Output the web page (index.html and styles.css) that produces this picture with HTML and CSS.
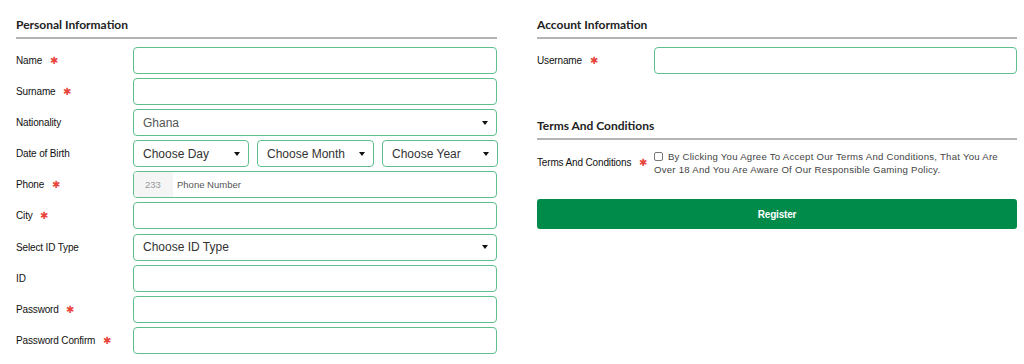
FILE: index.html
```html
<!DOCTYPE html>
<html lang="en">
<head>
    <meta charset="UTF-8">
    <meta name="viewport" content="width=device-width, initial-scale=1.0">
    <title>Register</title>
    <link rel="stylesheet" href="styles.css">
</head>
<body>
    <div class="register">
        <div class="column">
            <h3 class="section-title">Personal Information</h3>

            <div class="row">
                <label class="label">Name <span class="req">&#10033;</span></label>
                <input class="field" type="text">
            </div>
            <div class="row">
                <label class="label">Surname <span class="req">&#10033;</span></label>
                <input class="field" type="text">
            </div>
            <div class="row">
                <label class="label">Nationality</label>
                <div class="field select muted">Ghana <span class="caret"></span></div>
            </div>
            <div class="row">
                <label class="label">Date of Birth</label>
                <div class="dob">
                    <div class="field select">Choose Day <span class="caret"></span></div>
                    <div class="field select">Choose Month <span class="caret"></span></div>
                    <div class="field select">Choose Year <span class="caret"></span></div>
                </div>
            </div>
            <div class="row">
                <label class="label">Phone <span class="req">&#10033;</span></label>
                <div class="field phone">
                    <span class="prefix">233</span>
                    <span class="placeholder">Phone Number</span>
                </div>
            </div>
            <div class="row">
                <label class="label">City <span class="req">&#10033;</span></label>
                <input class="field" type="text">
            </div>
            <div class="row">
                <label class="label">Select ID Type</label>
                <div class="field select">Choose ID Type <span class="caret"></span></div>
            </div>
            <div class="row">
                <label class="label">ID</label>
                <input class="field" type="text">
            </div>
            <div class="row">
                <label class="label">Password <span class="req">&#10033;</span></label>
                <input class="field" type="password">
            </div>
            <div class="row">
                <label class="label">Password Confirm <span class="req">&#10033;</span></label>
                <input class="field" type="password">
            </div>
        </div>

        <div class="column">
            <h3 class="section-title">Account Information</h3>

            <div class="row">
                <label class="label">Username <span class="req">&#10033;</span></label>
                <input class="field" type="text">
            </div>

            <h3 class="section-title terms-title">Terms And Conditions</h3>

            <div class="row terms-row">
                <label class="label">Terms And Conditions <span class="req">&#10033;</span></label>
                <p class="terms-text">
                    <span class="checkbox"></span>
                    By Clicking You Agree To Accept Our Terms And Conditions, That You Are
                    Over 18 And You Are Aware Of Our Responsible Gaming Policy.
                </p>
            </div>

            <button class="register-button">Register</button>
        </div>
    </div>
</body>
</html>
```

FILE: styles.css
```css
* {
    margin: 0;
    padding: 0;
    box-sizing: border-box;
}

body {
    font-family: "Liberation Sans", Arial, sans-serif;
    background: #fff;
    color: #222;
    padding: 17px 7px 0 16px;
}

.register {
    display: grid;
    grid-template-columns: 481px 480px;
    column-gap: 40px;
}

.section-title {
    font-family: Lato, "Open Sans", sans-serif;
    font-weight: 700;
    font-size: 12px;
    color: #222;
    padding-bottom: 5px;
    border-bottom: 2px solid #b4b4b4;
    margin-bottom: 8px;
}

.row {
    display: flex;
    align-items: center;
    margin-bottom: 4.1px;
}

.label {
    width: 117px;
    flex-shrink: 0;
    font-size: 10px;
    color: #111;
    letter-spacing: -0.15px;
}

.req {
    color: #e8453c;
    font-size: 10px;
    margin-left: 5px;
}

.field {
    flex: 1;
    height: 27px;
    border: 1px solid #5fbf8c;
    border-radius: 4px;
    background: #fff;
    font-family: "Liberation Sans", Arial, sans-serif;
    font-size: 12px;
    color: #333;
    outline: none;
}

.select {
    display: flex;
    align-items: center;
    justify-content: space-between;
    padding: 0 8px 0 9px;
}

.muted {
    color: #555;
}

.caret {
    width: 0;
    height: 0;
    border-left: 3.5px solid transparent;
    border-right: 3.5px solid transparent;
    border-top: 4px solid #111;
}

.dob {
    flex: 1;
    display: flex;
    gap: 8px;
}

.dob .field {
    flex: none;
    width: 116px;
}

.dob .field:nth-child(2) {
    width: 117px;
}

.phone {
    display: flex;
    align-items: stretch;
    overflow: hidden;
}

.prefix {
    width: 39px;
    background: #f5f5f5;
    color: #999;
    font-size: 9.5px;
    display: flex;
    align-items: center;
    padding-left: 11px;
}

.placeholder {
    color: #555;
    font-size: 9.5px;
    display: flex;
    align-items: center;
    padding-left: 4px;
}

.terms-title {
    margin-top: 44px;
    margin-bottom: 10px;
}

.terms-row {
    align-items: flex-start;
}

.terms-row .label {
    padding-top: 7px;
}

.terms-text {
    font-size: 9.6px;
    line-height: 13px;
    color: #444;
    letter-spacing: 0.25px;
}

.checkbox {
    display: inline-block;
    width: 9px;
    height: 9px;
    border: 1px solid #777;
    border-radius: 2px;
    margin-right: 2px;
    vertical-align: -1px;
}

.register-button {
    margin-top: 19px;
    width: 100%;
    height: 30px;
    background: #008b4a;
    color: #fff;
    border: none;
    border-radius: 3px;
    font-family: "Liberation Sans", Arial, sans-serif;
    font-size: 10px;
    font-weight: 700;
    letter-spacing: -0.2px;
}
```
